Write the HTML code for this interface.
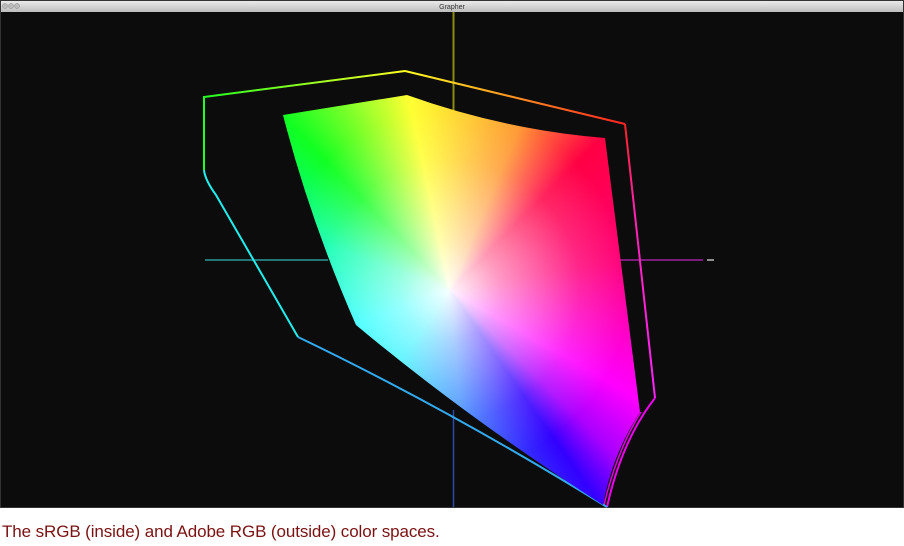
<!DOCTYPE html>
<html><head><meta charset="utf-8"><style>
html,body{margin:0;padding:0;background:#fff;width:904px;height:546px;overflow:hidden;position:relative}
.cap{position:absolute;left:2px;top:522px;font-family:"Liberation Sans",sans-serif;font-size:17px;line-height:20px;color:#7a1212;letter-spacing:-0.1px;white-space:nowrap}
.gam{position:absolute;left:250px;top:80px;width:420px;height:440px;
clip-path:path("M33,35 L157,15 Q255,50 355,58 L390,332 Q362,375 353,425 Q220,340 106,245 Q60,140 33,35 Z");
background:radial-gradient(circle at 200px 210px, rgba(255,255,255,.97) 0, rgba(255,255,255,.6) 50px, rgba(255,255,255,.15) 130px, rgba(255,255,255,0) 180px),
conic-gradient(from 0deg at 200px 210px, #fd3 0deg, #f93 23deg, #f04 45deg, #f07 80deg, #f0f 120deg, #a0f 135deg, #30f 145deg, #38f 175deg, #0ef 215deg, #0ff 250deg, #0fa 290deg, #1f2 316deg, #ff3 348deg, #fd3 360deg);}
</style></head><body>
<svg width="904" height="546" style="position:absolute;left:0;top:0">
<defs>
<linearGradient id="tb" x1="0" y1="0" x2="0" y2="1"><stop offset="0" stop-color="#eee"/><stop offset="1" stop-color="#bdbdbd"/></linearGradient>
<linearGradient id="g1" x1="0" y1="0" x2="1" y2="0"><stop offset="0" stop-color="#2f2"/><stop offset="1" stop-color="#ff2"/></linearGradient>
<linearGradient id="g2" x1="0" y1="0" x2="1" y2="0"><stop offset="0" stop-color="#ff2"/><stop offset="1" stop-color="#f22"/></linearGradient>
<linearGradient id="g3" x1="0" y1="0" x2="0" y2="1"><stop offset="0" stop-color="#f22"/><stop offset="0.3" stop-color="#f2a"/><stop offset="1" stop-color="#f2f"/></linearGradient>
</defs>
<rect x="0" y="0" width="904" height="12" fill="url(#tb)"/>
<rect x="0.5" y="0.5" width="903" height="507" fill="none" stroke="#333" stroke-width="1"/>
<circle cx="5" cy="6" r="2.5" fill="#bbb" stroke="#888" stroke-width=".5"/><circle cx="11" cy="6" r="2.5" fill="#bbb" stroke="#888" stroke-width=".5"/><circle cx="17" cy="6" r="2.5" fill="#bbb" stroke="#888" stroke-width=".5"/>
<text x="452" y="9" font-family="Liberation Sans,sans-serif" font-size="7" text-anchor="middle" fill="#333">Grapher</text>
<rect x="1" y="12" width="902" height="495" fill="#0c0c0c"/>
<line x1="453.5" y1="12" x2="453.5" y2="115" stroke="#8a8a10" stroke-width="2"/>
<line x1="453.5" y1="410" x2="453.5" y2="507" stroke="#2a4aa8" stroke-width="1.5"/>
<line x1="205" y1="260" x2="328" y2="260" stroke="#2a9a9a" stroke-width="1.5"/>
<line x1="607" y1="260" x2="703" y2="260" stroke="#a020a0" stroke-width="1.5"/>
<line x1="707" y1="260" x2="714" y2="260" stroke="#bbb" stroke-width="1.5"/>
<g fill="none" stroke-width="2">
<path d="M204,170 L204,97 L405,71" stroke="url(#g1)"/>
<path d="M405,71 L625,124" stroke="url(#g2)"/>
<path d="M625,124 L655,398" stroke="url(#g3)"/>
<path d="M655,398 Q622,440 607,507" stroke="#e0e"/>
<path d="M641,412 Q617,450 604,505" stroke="#d0d" stroke-width="1.5"/>
<path d="M607,507 Q450,410 298,337" stroke="#3ae"/>
<path d="M298,337 L216,195 Q205,180 204,170" stroke="#2ee"/>
</g>
</svg>
<div class="gam"></div>
<div class="cap">The sRGB (inside) and Adobe RGB (outside) color spaces.</div>
</body></html>
